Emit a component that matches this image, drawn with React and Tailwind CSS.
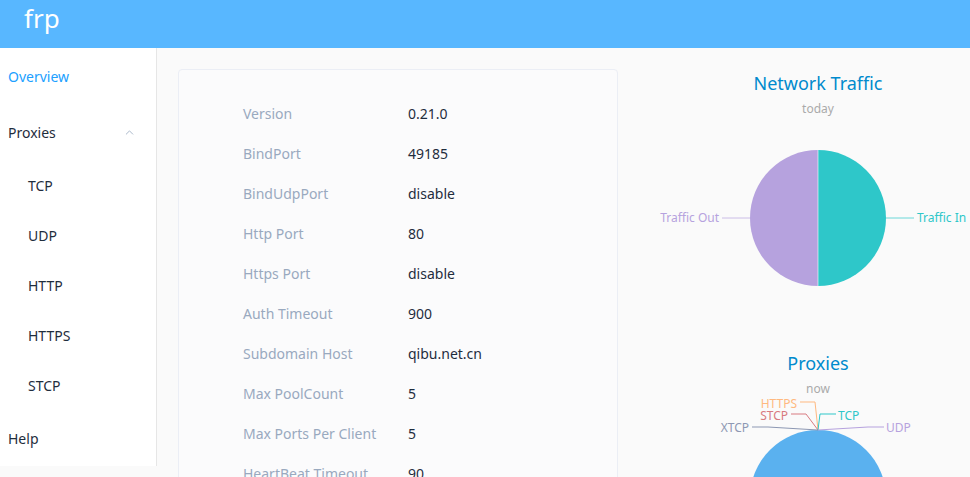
import { ChevronUp } from "lucide-react";

const serverInfo = [
  ["Version", "0.21.0"],
  ["BindPort", "49185"],
  ["BindUdpPort", "disable"],
  ["Http Port", "80"],
  ["Https Port", "disable"],
  ["Auth Timeout", "900"],
  ["Subdomain Host", "qibu.net.cn"],
  ["Max PoolCount", "5"],
  ["Max Ports Per Client", "5"],
  ["HeartBeat Timeout", "90"],
];

const proxyTypes = ["TCP", "UDP", "HTTP", "HTTPS", "STCP"];

function Sidebar() {
  return (
    <aside className="w-[157px] shrink-0 self-start h-[418px] bg-white border-r border-[#e6e6e6] text-[14px]">
      <div className="h-14 flex items-center px-2 text-[#20a0ff]">Overview</div>
      <div className="h-14 flex items-center justify-between pl-2 pr-5 text-[#1f2d3d]">
        <span>Proxies</span>
        <ChevronUp size={13} strokeWidth={1.5} className="text-[#97a8be]" />
      </div>
      {proxyTypes.map((t) => (
        <div key={t} className="h-[50px] flex items-center pl-7 text-[#1f2d3d]">
          {t}
        </div>
      ))}
      <div className="h-14 flex items-center px-2 text-[#1f2d3d]">Help</div>
    </aside>
  );
}

// drawn in page coordinates: the svg sits at x=618, y=69
function Charts() {
  const label = { fontSize: 12 };
  return (
    <svg width="352" height="408" viewBox="618 69 352 408" className="shrink-0 block">
      {/* network traffic */}
      <text x="818" y="90" textAnchor="middle" fill="#008acd" fontSize="18">
        Network Traffic
      </text>
      <text x="818" y="113" textAnchor="middle" fill="#aaa" fontSize="12">
        today
      </text>
      <path d="M818 150 A68 68 0 0 0 818 286 Z" fill="#b6a2de" />
      <path d="M818 150 A68 68 0 0 1 818 286 Z" fill="#2ec7c9" />
      <line x1="818" y1="150" x2="818" y2="286" stroke="#fff" strokeWidth="0.6" />
      <polyline points="750,218 733,218 722,218" fill="none" stroke="#b6a2de" strokeOpacity="0.7" />
      <text x="719" y="222" textAnchor="end" fill="#b6a2de" {...label}>
        Traffic Out
      </text>
      <polyline points="886,218 902,218 914,218" fill="none" stroke="#2ec7c9" strokeOpacity="0.7" />
      <text x="917" y="222" fill="#2ec7c9" {...label}>
        Traffic In
      </text>

      {/* proxies */}
      <text x="818" y="370" textAnchor="middle" fill="#008acd" fontSize="18">
        Proxies
      </text>
      <text x="818" y="393" textAnchor="middle" fill="#aaa" fontSize="12">
        now
      </text>
      <circle cx="818" cy="498" r="68" fill="#5ab1ef" />
      <polyline points="800,402 815,402 818,430" fill="none" stroke="#ffb980" />
      <text x="797" y="408" textAnchor="end" fill="#ffb980" {...label}>
        HTTPS
      </text>
      <polyline points="791,414 806,414 818,430" fill="none" stroke="#d87a80" />
      <text x="788" y="420" textAnchor="end" fill="#d87a80" {...label}>
        STCP
      </text>
      <polyline points="818,430 820,414 836,414" fill="none" stroke="#2ec7c9" />
      <text x="838" y="420" fill="#2ec7c9" {...label}>
        TCP
      </text>
      <polyline points="752,427 768,427 818,430" fill="none" stroke="#8d98b3" />
      <text x="749" y="432" textAnchor="end" fill="#8d98b3" {...label}>
        XTCP
      </text>
      <polyline points="818,430 868,427 884,427" fill="none" stroke="#b6a2de" />
      <text x="886" y="432" fill="#b6a2de" {...label}>
        UDP
      </text>
    </svg>
  );
}

export default function App() {
  return (
    <div
      className="w-full h-[477px] overflow-hidden bg-[#fafafa] flex flex-col"
      style={{ fontFamily: '"Noto Sans", "Open Sans", Arial, sans-serif' }}
    >
      <header className="h-12 shrink-0 bg-[#58b7ff] flex items-center px-6">
        <span className="text-white text-[26px] leading-none -mt-3">frp</span>
      </header>
      <div className="flex flex-1 min-h-0">
        <Sidebar />
        <main className="flex flex-1 min-w-0 pl-[21px] pt-[21px]">
          <section className="w-[440px] shrink-0 h-[460px] bg-[#fbfbfc] border border-[#ebeef5] rounded pt-[23px] pl-16 text-[14px]">
            {serverInfo.map(([k, v]) => (
              <div key={k} className="h-10 flex items-center">
                <span className="w-[165px] text-[#99a9bf]">{k}</span>
                <span className="text-[#1f2d3d]">{v}</span>
              </div>
            ))}
          </section>
          <Charts />
        </main>
      </div>
    </div>
  );
}
